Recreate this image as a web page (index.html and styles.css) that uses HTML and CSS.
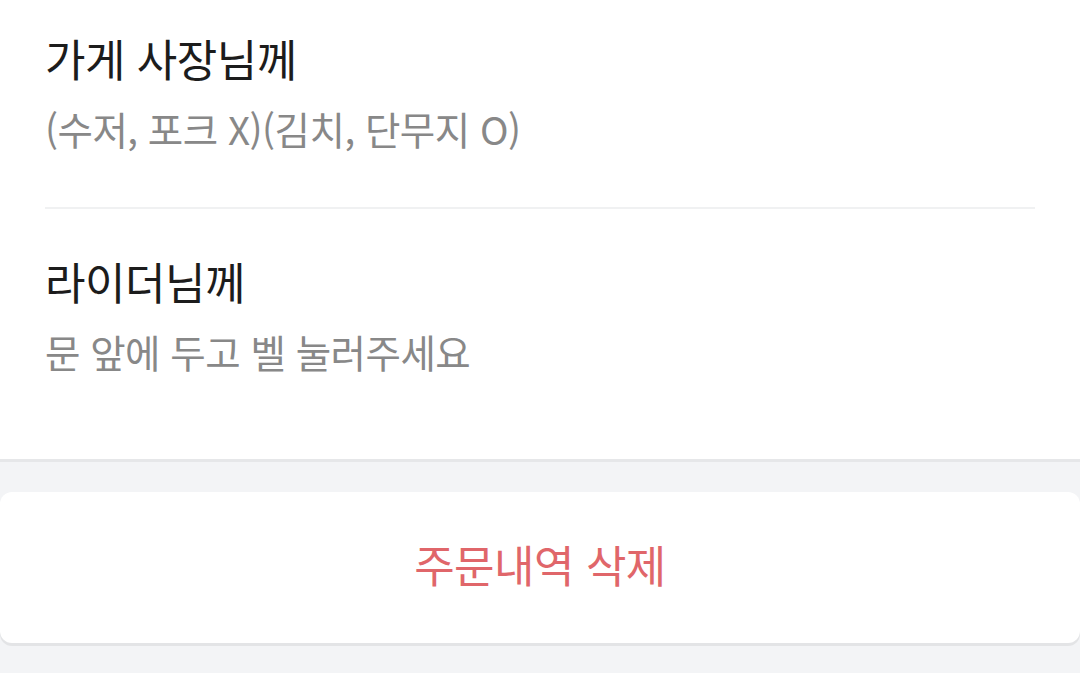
FILE: index.html
```html
<!DOCTYPE html>
<html lang="ko">
<head>
<meta charset="utf-8">
<link rel="stylesheet" href="styles.css">
</head>
<body>
<div class="page">
  <section class="requests">
    <div class="request">
      <div class="request-title">가게 사장님께</div>
      <div class="request-text">(수저, 포크 X)(김치, 단무지 O)</div>
    </div>
    <div class="request">
      <div class="request-title">라이더님께</div>
      <div class="request-text">문 앞에 두고 벨 눌러주세요</div>
    </div>
  </section>
  <div class="actions">
    <button class="delete-btn">주문내역 삭제</button>
  </div>
</div>
</body>
</html>
```
FILE: styles.css
```css
html, body {
  margin: 0;
  padding: 0;
  background: #f3f4f6;
  font-family: "Noto Sans CJK KR", "Noto Sans", sans-serif;
}
.page {
  width: 1080px;
  height: 673px;
  overflow: hidden;
}
.requests {
  background: #fff;
  padding: 0 45px;
  border-bottom: 3px solid #e6e7e9;
  height: 459px;
  box-sizing: content-box;
}
.request {
  padding-top: 27px;
  height: 180px;
  border-bottom: 2px solid #f0f1f2;
}
.request:last-child {
  border-bottom: none;
  padding-top: 41px;
  height: auto;
}
.request-title {
  font-size: 44px;
  line-height: 62px;
  color: #1c1c1c;
  letter-spacing: -0.5px;
}
.request-text {
  font-size: 38.5px;
  line-height: 78px;
  color: #888;
  letter-spacing: -0.5px;
}
.actions {
  padding-top: 30px;
}
.delete-btn {
  display: flex;
  align-items: center;
  justify-content: center;
  width: 1080px;
  height: 151px;
  margin: 0;
  border: none;
  border-radius: 12px;
  background: #fff;
  box-shadow: 0 3px 0 #e3e4e6;
  font-family: inherit;
  font-size: 44px;
  color: #e0666a;
  letter-spacing: -0.5px;
  padding: 0 0 8px;
}
```
